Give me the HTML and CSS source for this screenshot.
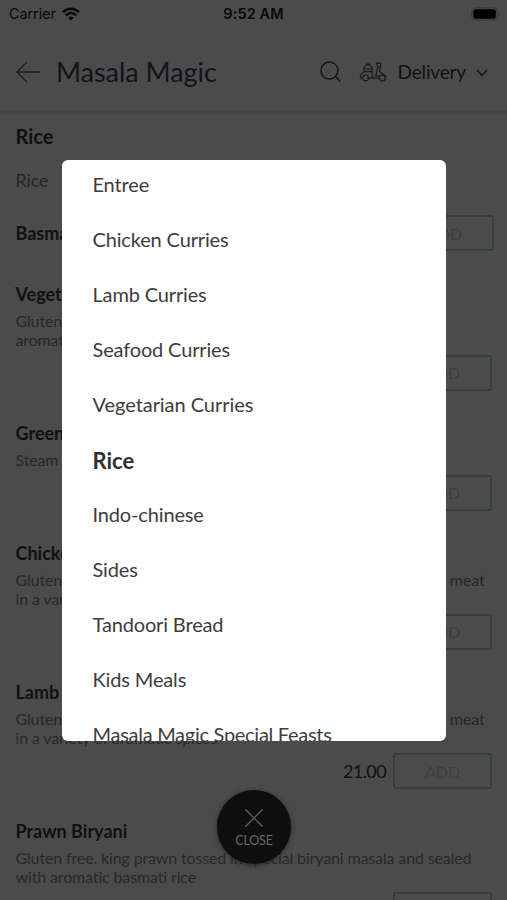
FILE: index.html
```html
<!DOCTYPE html>
<html lang="en">
<head>
<meta charset="utf-8">
<title>Masala Magic</title>
<link rel="stylesheet" href="styles.css">
</head>
<body>
<div class="screen">
  <div class="status">
    <div class="carrier"><span>Carrier</span>
      <svg width="18" height="14" viewBox="0 0 18 14" fill="none" stroke="#080808" stroke-width="2.6"><path d="M1 5.2C5.5.5 12.500.5 17 5.200M3.900 8.300C6.800 5.300 11.200 5.300 14.100 8.300"/><path d="M9 13.500 6.200 10.700Q9 8.200 11.800 10.700Z" fill="#080808" stroke="none"/></svg>
    </div>
    <div class="clock">9:52 AM</div>
    <div class="power"><svg width="30" height="14" viewBox="0 0 30 14"><rect x=".8" y=".8" width="25.500" height="12.400" rx="3.500" fill="none" stroke="#383838"/><rect x="2.300" y="2.300" width="22.500" height="9.400" rx="2" fill="#000"/><path d="M28 5q2 2 0 4z" fill="#303030"/></svg></div>
  </div>
  <header class="header">
    <svg class="back" width="25" height="22" viewBox="0 0 25 22" fill="none" stroke="#1e1e1e" stroke-width="1.400"><path d="M11 1 1 11l10 10M1 11h23.500"/></svg>
    <h1>Masala Magic</h1>
    <svg class="search" width="22" height="22" viewBox="0 0 22 22" fill="none" stroke="#161616" stroke-width="1.500"><circle cx="9.500" cy="9.500" r="8.500"/><path d="m15.500 15.500 5 5"/></svg>
    <svg class="scooter" width="28" height="20" viewBox="0 0 28 20" fill="none" stroke="#1c1c1c" stroke-width="1.200" stroke-linejoin="round" stroke-linecap="round"><path d="M5 9.500V6Q5.500 2.800 9 2.800T13.200 6V15.500M5 7.200h8M7.300 2.800Q9 1 10.700 2.800M3.500 16H1.300Q1.300 11 5.500 9.700H13M9.500 16.200H20.300M17.500 1.200h4.200V5H19L17.500 1.200M18.800 5 17.200 12.500 16 13.800H20.500M21.700 5 20.500 9.500 26 13.500Q27 14.500 26.700 16"/><circle cx="6.500" cy="16" r="2.900"/><circle cx="23.300" cy="16" r="2.900"/></svg>
    <span class="mode">Delivery</span>
    <svg class="chevron" width="12" height="8" viewBox="0 0 12 8" fill="none" stroke="#161616" stroke-width="1.500"><path d="m1 1 5 5.500L11 1"/></svg>
  </header>
  <main class="menu">
    <h2>Rice</h2>
    <p class="subtitle">Rice</p>
    <article class="simple"><h3>Basmati Rice</h3><span class="add">ADD</span></article>
    <article class="dish"><h3>Vegetable Biryani</h3><p>Gluten free. Vegetables cooked with<br>aromatic basmati rice</p><div class="buy"><span class="add">ADD</span></div></article>
    <article class="dish"><h3>Green Peas Rice</h3><p>Steam rice with green peas</p><div class="buy"><span class="add">ADD</span></div></article>
    <article class="dish"><h3>Chicken Biryani</h3><p><span class="spread"><span>Gluten free. basmati rice cooked with pieces of</span><span>meat</span></span>in a variety of aromatic spices</p><div class="buy"><span class="add">ADD</span></div></article>
    <article class="dish"><h3>Lamb Biryani</h3><p><span class="spread"><span>Gluten free. basmati rice cooked with pieces of</span><span>meat</span></span>in a variety of aromatic spices</p><div class="buy"><span class="price">21.00</span><span class="add">ADD</span></div></article>
    <article class="dish"><h3>Prawn Biryani</h3><p>Gluten free. king prawn tossed in special biryani masala and sealed<br>with aromatic basmati rice</p><div class="buy"><span class="add">ADD</span></div></article>
  </main>
  <nav class="categories">
    <ul>
      <li>Entree</li><li>Chicken Curries</li><li>Lamb Curries</li><li>Seafood Curries</li><li class="wide">Vegetarian Curries</li><li class="current">Rice</li><li>Indo-chinese</li><li>Sides</li><li>Tandoori Bread</li><li>Kids Meals</li><li class="long">Masala Magic Special Feasts</li>
    </ul>
  </nav>
  <div class="close"><svg width="18" height="18" viewBox="0 0 18 18" stroke="#686868" stroke-width="1.200"><path d="m.5.500 17 17m0-17-17 17"/></svg><span>CLOSE</span></div>
</div>
</body>
</html>
```
FILE: styles.css
```css
* { box-sizing: border-box; }
body { margin: 0; }
h1, h2, h3, p, ul { margin: 0; padding: 0; }
svg { display: block; flex: none; }
.screen { position: relative; width: 507px; height: 900px; overflow: hidden; background: #4b4b4b; font-family: Lato, "Liberation Sans", sans-serif; color: #101010; }
.status { display: grid; grid-template-columns: 1fr 1fr 1fr; align-items: center; height: 27px; padding: 0 6px 0 9px; font: 14.5px Inter, sans-serif; color: #080808; }
.carrier { display: flex; align-items: center; gap: 6px; letter-spacing: -0.1px; }
.clock { text-align: center; font-weight: 600; letter-spacing: 0.1px; margin-left: -3px; }
.power { display: flex; justify-content: flex-end; }
.header { display: flex; align-items: center; height: 87px; padding: 6px 19px 0 16px; border-bottom: 3px solid #464646; }
.header h1 { margin-left: 15px; font-size: 27px; font-weight: 400; line-height: 34px; letter-spacing: -0.05px; color: #10151a; flex: 1; white-space: nowrap; }
.search { margin-right: 2px; }
.scooter { margin-left: 15px; }
.mode { margin-left: 11px; font-size: 19px; line-height: 24px; letter-spacing: -0.15px; color: #121212; }
.chevron { margin: 2px 0 0 10px; }
.menu { padding: 10px 15px 0 15.5px; }
.menu h2 { font-size: 20px; line-height: 24px; font-weight: 700; }
.subtitle { margin-top: 20px; font-size: 18px; line-height: 24px; letter-spacing: -0.1px; color: #262626; }
.simple { display: flex; justify-content: space-between; align-items: center; height: 36px; margin: 23px -2px 30.5px 0; }
.menu h3 { font-size: 18px; line-height: 24px; font-weight: 700; color: #111; }
.dish p { margin-top: 5px; font-size: 16px; line-height: 19px; letter-spacing: -0.14px; color: #282828; white-space: nowrap; }
.spread { display: flex; justify-content: space-between; width: 469px; }
.dish .buy { display: flex; align-items: center; justify-content: flex-end; height: 36px; margin: 6px 0 30.2px; }
.price { margin-right: 7px; font-size: 18px; letter-spacing: -0.6px; }
.add { display: flex; align-items: center; justify-content: center; width: 99px; height: 36px; border: 2px solid #35403a; border-radius: 2px; font-size: 16px; color: #3a403c; }
.categories { position: absolute; left: 62px; top: 160px; width: 384px; height: 581px; overflow: hidden; border-radius: 6px; background: #fff; }
.categories ul { list-style: none; padding-left: 30.5px; margin-top: -3.5px; }
.categories li { height: 55px; font-size: 20px; line-height: 55px; letter-spacing: -0.15px; color: #3d3d3d; }
.categories .long { letter-spacing: -0.28px; }
.categories .wide { letter-spacing: -0.05px; }
.categories .current { padding-top: 1.500px; font-size: 22px; font-weight: 700; letter-spacing: 0; color: #303030; }
.close { position: absolute; left: 217px; top: 790px; width: 74px; height: 74px; display: flex; flex-direction: column; align-items: center; padding-top: 19px; border-radius: 50%; background: #0e0e0e; box-shadow: 0 1px 5px #282828; color: #686868; font-size: 12.5px; line-height: 16px; }
.close span { margin-top: 6px; letter-spacing: -0.2px; }
```
